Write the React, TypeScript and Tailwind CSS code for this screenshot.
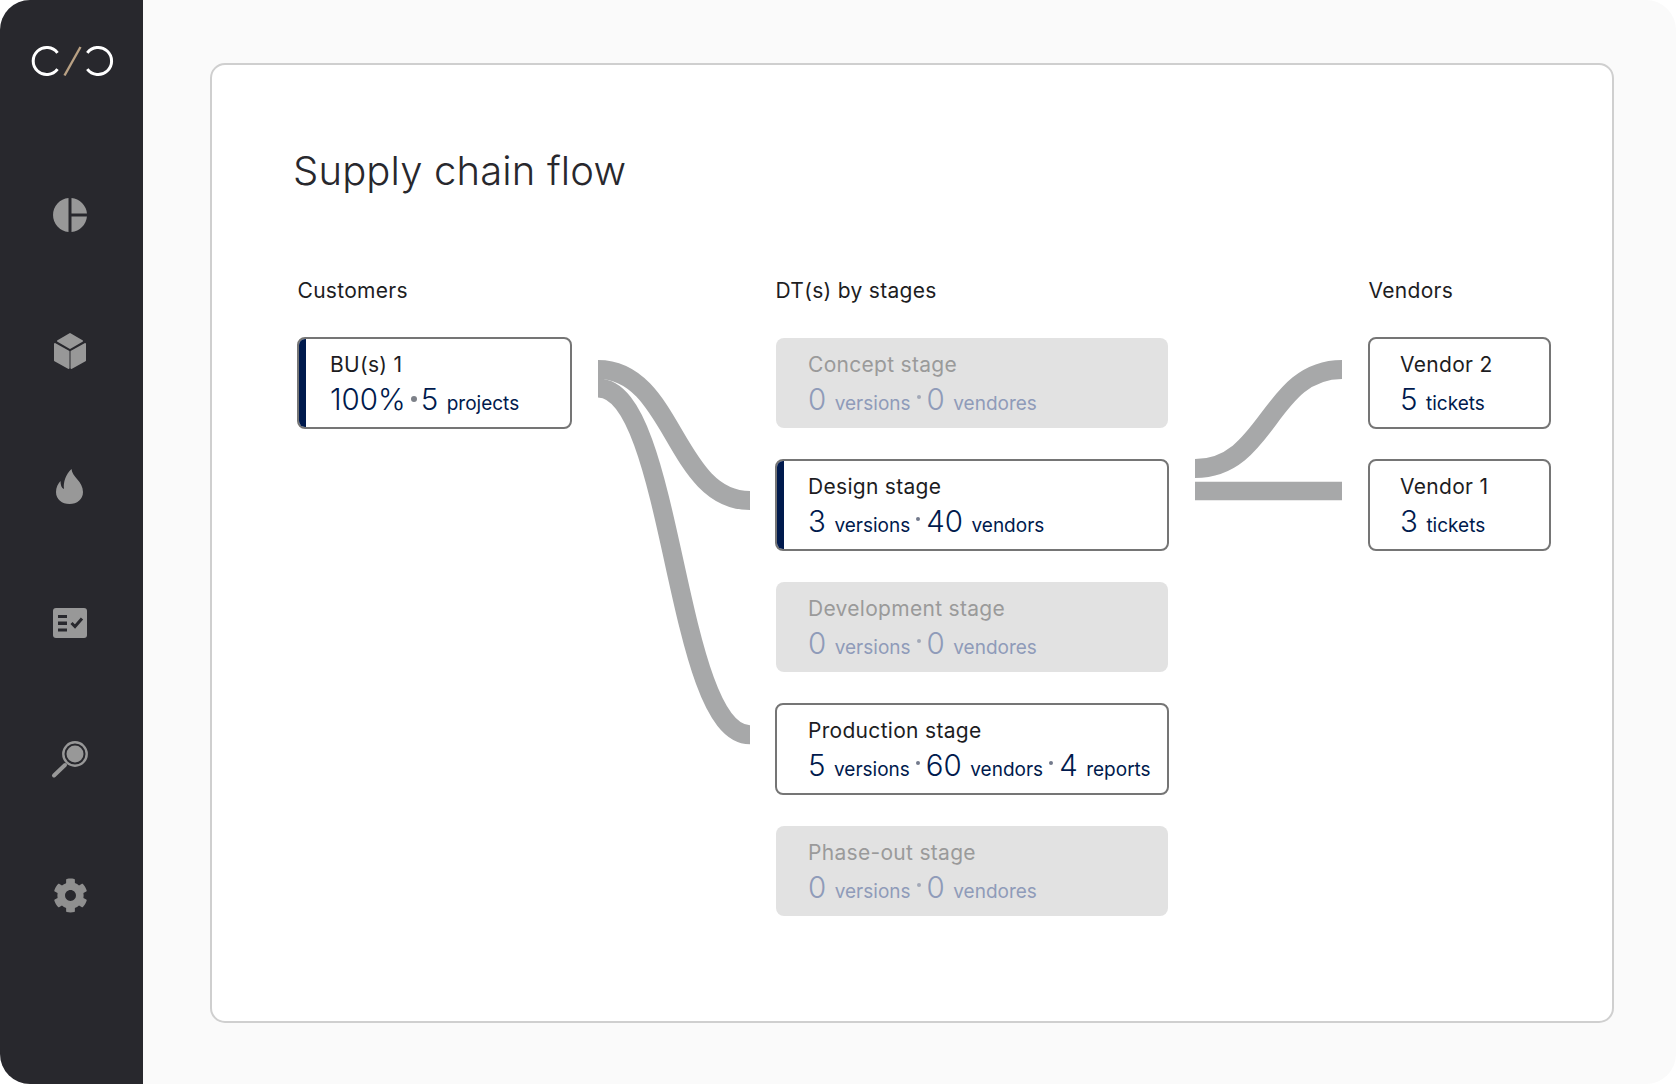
import React from "react";
import { FaCog } from "react-icons/fa";

const ICON = "#989898";

function Logo() {
  return (
    <svg width="84" height="32" viewBox="30 45 84 32" fill="none">
      <path d="M57.5 52.9 A13.5 13.5 0 1 0 57.5 69.1" stroke="#fff" strokeWidth="3" />
      <path d="M87.3 52.9 A13.5 13.5 0 1 1 87.3 69.1" stroke="#fff" strokeWidth="3" />
      <path d="M80.5 47 L64.5 75.5" stroke="#b9a184" strokeWidth="2.4" />
    </svg>
  );
}

function Box({ children }: { children: React.ReactNode }) {
  return (
    <svg width="40" height="40" viewBox="0 0 40 40" className="block">
      {children}
    </svg>
  );
}

function Pie() {
  return (
    <Box>
      <path d="M18.5 3.07 A17 17 0 0 0 18.5 36.93 Z" fill={ICON} />
      <path d="M21.5 3.07 A17 17 0 0 1 36.93 18.5 L21.5 18.5 Z" fill={ICON} />
      <path d="M21.5 36.93 A17 17 0 0 0 36.93 21.5 L21.5 21.5 Z" fill={ICON} />
    </Box>
  );
}

function Cube() {
  return (
    <Box>
      <g fill={ICON} stroke={ICON} strokeWidth="2" strokeLinejoin="round">
        <path d="M20 3 L32 10 L20 17 L8 10 Z" />
        <path d="M5 13 L18.5 20.5 L18.5 37 L5 29.5 Z" />
        <path d="M35 13 L21.5 20.5 L21.5 37 L35 29.5 Z" />
      </g>
    </Box>
  );
}

function Flame() {
  return (
    <Box>
      <path
        d="M21.5 2 C22 10 33 14 33 25 C33 32.5 27 37 19.5 37 C12 37 6 32.5 6 25 C6 20.5 8 16.5 10.5 14 C10.5 18 11.5 21 14 22 C13 15 16 7 21.5 2 Z"
        fill={ICON}
      />
    </Box>
  );
}

function Checklist() {
  return (
    <Box>
      <rect x="3" y="5" width="34" height="30" rx="3" fill={ICON} />
      <g fill="#28282d">
        <rect x="8" y="12" width="9" height="3" />
        <rect x="8" y="18.5" width="9" height="3.5" />
        <rect x="8" y="25.5" width="9" height="3" />
      </g>
      <path d="M21.5 20 L25 23.5 L32 15.5" stroke="#28282d" strokeWidth="3" fill="none" />
    </Box>
  );
}

function Search() {
  return (
    <Box>
      <circle cx="25" cy="15" r="11.7" fill="none" stroke={ICON} strokeWidth="2.4" />
      <circle cx="25" cy="15" r="8.5" fill={ICON} />
      <path d="M4 36.5 L15 26" stroke={ICON} strokeWidth="4" strokeLinecap="round" />
    </Box>
  );
}

function Gear() {
  return (
    <div className="flex h-10 w-10 items-center justify-center text-[#8f8f8f]">
      <FaCog size={35} />
    </div>
  );
}

function Dot({ big, muted }: { big?: boolean; muted?: boolean }) {
  if (big) {
    return <span className="ml-[5px] mr-[4px] h-[6px] w-[6px] self-center rounded-full bg-[#7d8189]" />;
  }
  return (
    <span
      className={
        muted
          ? "mx-[6px] h-[4px] w-[4px] -translate-y-[2px] self-center rounded-full bg-[#a3a9b8]"
          : "mx-[6px] h-[4px] w-[4px] -translate-y-[2px] self-center rounded-full bg-[#737a8c]"
      }
    />
  );
}

type Part = { n: string; label?: string; big?: boolean };

function Stat({ parts, muted }: { parts: Part[]; muted?: boolean }) {
  return (
    <div
      className={
        muted
          ? "mt-[4.5px] flex h-[35px] items-baseline text-[#8f9bb9]"
          : "mt-[4.5px] flex h-[35px] items-baseline text-[#001a4d]"
      }
    >
      {parts.map((p, i) => (
        <React.Fragment key={i}>
          {i > 0 && <Dot big={p.big} muted={muted} />}
          <span className="text-[29.5px] font-[350] leading-[35px]">{p.n}</span>
          {p.label && <span className="ml-[8.5px] text-[19px] leading-[35px]">{p.label}</span>}
        </React.Fragment>
      ))}
    </div>
  );
}

function Node({
  title,
  parts,
  bar,
  vendor,
  width,
}: {
  title: string;
  parts: Part[];
  bar?: boolean;
  vendor?: boolean;
  width: string;
}) {
  return (
    <div className={`flex h-[92px] overflow-hidden rounded-[8px] border-2 border-[#757575] bg-white ${width}`}>
      <div className={bar ? "w-[7px] shrink-0 bg-[#001a4d]" : "w-0 shrink-0"} />
      <div className={bar ? "pl-[24px] pt-[13px]" : vendor ? "pl-[30px] pt-[13px]" : "pl-[31px] pt-[13px]"}>
        <div className="text-[21px] leading-[25px] tracking-[0.3px] text-[#1d1d1f]">{title}</div>
        <Stat parts={parts} />
      </div>
    </div>
  );
}

function MutedNode({ title, parts }: { title: string; parts: Part[] }) {
  return (
    <div className="m-px flex h-[90px] w-[392px] rounded-[8px] bg-[#e2e2e2]">
      <div className="pl-[32px] pt-[14px]">
        <div className="text-[21px] leading-[25px] tracking-[0.3px] text-[#9a9a9a]">{title}</div>
        <Stat parts={parts} muted />
      </div>
    </div>
  );
}

function Heading({ children }: { children: React.ReactNode }) {
  return <div className="h-[25px] pl-[0.5px] text-[21px] leading-[23px] tracking-[0.3px] text-[#1d1d1f]">{children}</div>;
}

function link(x0: number, y0: number, x1: number, y1: number) {
  const m = (x0 + x1) / 2;
  return `M${x0} ${y0} C${m} ${y0} ${m} ${y1} ${x1} ${y1}`;
}

const zero: Part[] = [
  { n: "0", label: "versions" },
  { n: "0", label: "vendores" },
];

export default function App() {
  return (
    <div className="h-[1084px] w-[1676px] bg-white font-['Inter',sans-serif]">
      <div className="flex h-full w-full overflow-hidden rounded-[30px] bg-[#fafafa]">
        <aside className="flex h-full w-[143px] shrink-0 flex-col bg-[#28282d] pl-[50px] pt-[45px]">
          <div className="-ml-[20px] h-[32px]">
            <Logo />
          </div>
          <div className="mt-[118px] flex flex-col gap-[96px]">
            <Pie />
            <Cube />
            <Flame />
            <Checklist />
            <Search />
            <Gear />
          </div>
        </aside>
        <main className="ml-[66.5px] mt-[63px] h-[960px] w-[1404.5px] rounded-[15px] border-2 border-[#cfcfcf] bg-white pl-[85.5px] pt-[84px]">
          <h1 className="-ml-[4px] h-[44px] text-[40px] font-light leading-[44px] tracking-[0.15px] text-[#28282d]">Supply chain flow</h1>
          <div className="mt-[86px] flex">
            <div className="w-[275px] shrink-0">
              <Heading>Customers</Heading>
              <div className="mt-[33px]">
                <Node
                  title="BU(s) 1"
                  bar
                  width="w-[275px]"
                  parts={[{ n: "100%" }, { n: "5", label: "projects", big: true }]}
                />
              </div>
            </div>
            <svg width="203" height="480" viewBox="572 279 203 480" fill="none" className="shrink-0">
              <path d={link(598, 369.5, 750, 500.5)} stroke="#a7a8a9" strokeWidth="19" />
              <path d={link(598, 388, 750, 734.7)} stroke="#a7a8a9" strokeWidth="19" />
            </svg>
            <div className="w-[394px] shrink-0">
              <Heading>DT(s) by stages</Heading>
              <div className="mt-[33px] flex flex-col gap-[30px]">
                <MutedNode title="Concept stage" parts={zero} />
                <Node
                  title="Design stage"
                  bar
                  width="w-[394px]"
                  parts={[
                    { n: "3", label: "versions" },
                    { n: "40", label: "vendors" },
                  ]}
                />
                <MutedNode title="Development stage" parts={zero} />
                <Node
                  title="Production stage"
                  width="w-[394px]"
                  parts={[
                    { n: "5", label: "versions" },
                    { n: "60", label: "vendors" },
                    { n: "4", label: "reports" },
                  ]}
                />
                <MutedNode title="Phase-out stage" parts={zero} />
              </div>
            </div>
            <svg width="199" height="240" viewBox="1169 279 199 240" fill="none" className="shrink-0">
              <path d={link(1195, 468.5, 1342, 369.5)} stroke="#a7a8a9" strokeWidth="19" />
              <path d="M1195 491 L1342 491" stroke="#a7a8a9" strokeWidth="18.5" />
            </svg>
            <div className="w-[183px] shrink-0">
              <Heading>Vendors</Heading>
              <div className="mt-[33px] flex flex-col gap-[30px]">
                <Node title="Vendor 2" vendor width="w-[183px]" parts={[{ n: "5", label: "tickets" }]} />
                <Node title="Vendor 1" vendor width="w-[183px]" parts={[{ n: "3", label: "tickets" }]} />
              </div>
            </div>
          </div>
        </main>
      </div>
    </div>
  );
}
